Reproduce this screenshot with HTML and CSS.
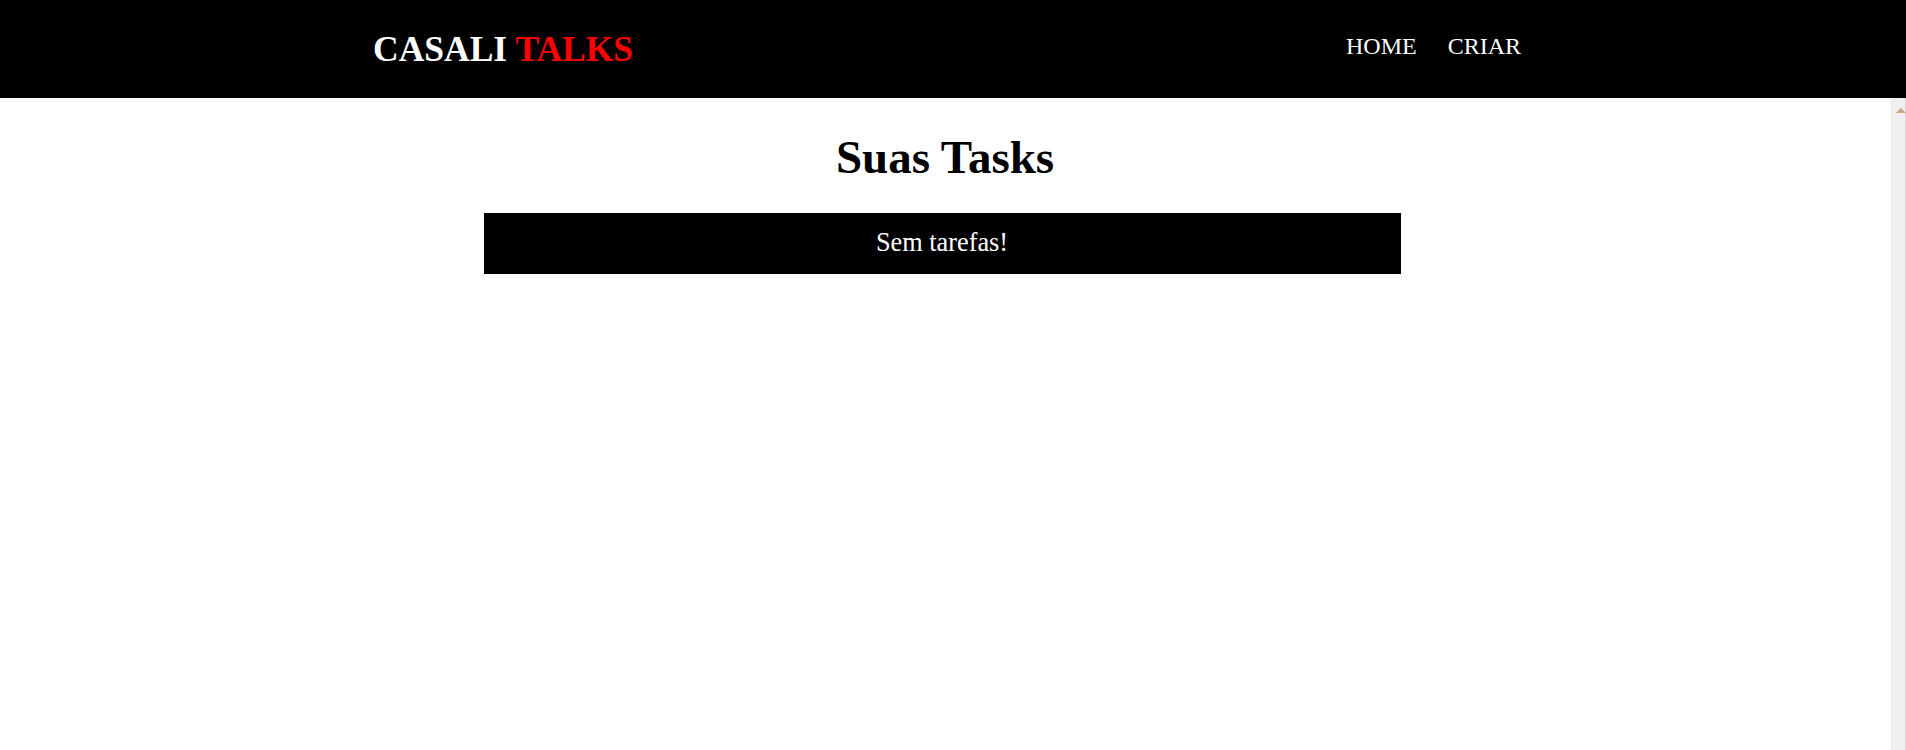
FILE: index.html
```html
<!DOCTYPE html>
<html lang="pt-BR">
<head>
<meta charset="utf-8">
<title>Casali Talks</title>
<link rel="stylesheet" href="styles.css">
</head>
<body>
<header class="topbar">
  <div class="topbar-inner">
    <div class="logo">CASALI <span class="logo-accent">TALKS</span></div>
    <nav class="nav">
      <a class="nav-link" href="#">HOME</a>
      <a class="nav-link" href="#">CRIAR</a>
    </nav>
  </div>
</header>
<div class="page">
  <main class="content">
    <h1 class="page-title">Suas Tasks</h1>
    <div class="empty-box">Sem tarefas!</div>
  </main>
  <div class="scrollbar" aria-hidden="true"><span class="scroll-arrow"></span></div>
</div>
</body>
</html>
```
FILE: styles.css
```css
html, body {
  margin: 0;
  padding: 0;
  height: 100%;
  overflow: hidden;
}
body {
  font-family: "Liberation Serif", "Times New Roman", serif;
  background: #fff;
  color: #000;
  display: flex;
  flex-direction: column;
}
.topbar {
  background: #000;
  height: 98px;
  flex: 0 0 98px;
}
.topbar-inner {
  max-width: 1160px;
  margin: 0 auto;
  padding-right: 12px;
  box-sizing: border-box;
  display: flex;
  justify-content: space-between;
  align-items: flex-start;
}
.logo {
  color: #fff;
  font-weight: bold;
  font-size: 35.5px;
  line-height: normal;
  margin-top: 28px;
}
.logo-accent {
  color: #ff0000;
}
.nav {
  display: flex;
  gap: 31px;
  margin-top: 33px;
}
.nav-link {
  color: #fff;
  text-decoration: none;
  font-size: 24px;
  line-height: normal;
}
.page {
  flex: 1 1 auto;
  display: flex;
  min-height: 0;
}
.content {
  flex: 1 1 auto;
  overflow: hidden;
}
.scrollbar {
  flex: 0 0 16px;
  box-sizing: border-box;
  background: #f0f0f0;
  border-left: 1px solid #f6f6f6;
  border-right: 1px solid #d4d4d4;
  position: relative;
}
.scroll-arrow {
  position: absolute;
  top: 10px;
  left: 5px;
  width: 0;
  height: 0;
  border-left: 5px solid transparent;
  border-right: 5px solid transparent;
  border-bottom: 5px solid #c9a47e;
}
.page-title {
  margin: 32px 0 0;
  font-size: 47px;
  font-weight: bold;
  line-height: normal;
  text-align: center;
}
.empty-box {
  background: #000;
  color: #fff;
  width: 917px;
  margin: 29px 0 0 calc(50% - 461.5px);
  padding: 15px 0 16px;
  font-size: 26.3px;
  line-height: 30px;
  text-align: center;
}
```
